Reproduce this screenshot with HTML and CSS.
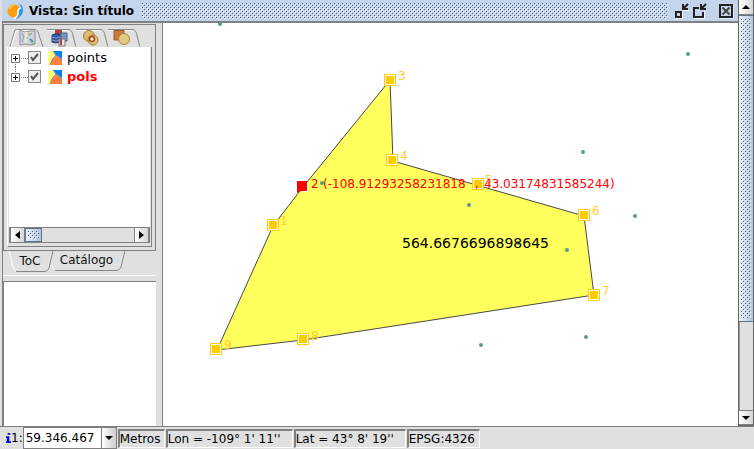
FILE: index.html
```html
<!DOCTYPE html>
<html lang="es">
<head>
<meta charset="utf-8">
<title>Vista: Sin título</title>
<link rel="stylesheet" href="styles.css">
</head>
<body>
<div class="app">
  <div class="workspace">
    <section class="window">
      <header class="titlebar">
        <svg class="logo" width="18" height="18" viewBox="0 0 18 18" aria-hidden="true">
          <circle cx="7" cy="9" r="6.600" fill="#ff9d10"/>
          <path d="M1 7Q3 2 8 2.500Q5 4 4 7Z" fill="#ffc04a"/>
          <path d="M11 1Q16.500 3 16 9Q15 15 8 17.500Q12 14 12 10Q12 7 14 6Q14 3 11 1Z" fill="#2499e8"/>
          <path d="M14 6Q10 7 11 11Q11 14 7 17" fill="none" stroke="#fff" stroke-width="1.500"/>
        </svg>
        <h1>Vista: Sin título</h1>
        <div class="grip"></div>
        <div class="controls">
          <button type="button" aria-label="Minimizar"><svg width="16" height="16" viewBox="0 0 16 16"><g fill="none" stroke="#fff" stroke-width="1"><path d="M2 15.500H8.500V9M9 7.500H15"/></g><g fill="none" stroke="#222" stroke-width="2"><path d="M2 9H7V14H2ZM14 1L9 6M9 1V6H14"/></g></svg></button>
          <button type="button" aria-label="Maximizar"><svg width="16" height="16" viewBox="0 0 16 16"><path d="M2 15.500H12.500V8" fill="none" stroke="#fff"/><path d="M7 5H2V14H11V9M14 1L9 6M9 1V6H14" fill="none" stroke="#222" stroke-width="2"/></svg></button>
          <button type="button" class="close" aria-label="Cerrar"><svg width="16" height="16" viewBox="0 0 16 16"><path d="M15 2V15H2" fill="none" stroke="#fff"/><path d="M2 2H14V14H2Z" fill="none" stroke="#222" stroke-width="2"/><path d="M4.500 4.500L11.500 11.500M11.500 4.500L4.500 11.500" stroke="#444" stroke-width="2"/></svg></button>
        </div>
      </header>
      <div class="content">
        <aside class="sidebar">
          <div class="toc">
            <div class="toc-body">
              <nav class="top-tabs" aria-label="Herramientas">
                <button type="button" aria-label="Mapa"><svg width="35" height="18" viewBox="0 0 35 18"><path d="M1 18L6 1Q7 .5 9 .5H26Q28 1 29 3L34 18" fill="#e0e0e0" stroke="#888"/><path d="M2 18L7 2Q8 1.500 9 1.500H25" fill="none" stroke="#fff"/><path d="M11 1.500L16 3L21 2L26 2V15L21 16L16 15L11 16Z" fill="#d0d3d8" stroke="#8d9299"/><path d="M13 4L15 8L13 13M23 4L20 7" fill="none" stroke="#6ba4c0"/><path d="M21 10L24 13" stroke="#4d98bd" stroke-width="2"/><path d="M17 3V14" stroke="#f5eccd" stroke-width="2"/><path d="M19 5H22M17 9H19M22 14H25" stroke="#a7ab67" stroke-width="1"/></svg></button>
                <button type="button" aria-label="Datos"><svg width="32" height="18" viewBox="0 0 32 18"><path d="M25 .5H3M25 .5Q27 1 28 3L32 18" fill="none" stroke="#888"/><path d="M3 1.500H24" stroke="#fff"/><path d="M11 1H18V6H11Z" fill="#a8443c"/><path d="M17 4H23V12H17Z" fill="#7797c6" stroke="#48658f"/><path d="M8 6Q13 3 16 6V13Q12 15 8 13Z" fill="#345998" stroke="#243c70"/><path d="M8 8Q12 10 16 8M8 11Q12 13 16 11" fill="none" stroke="#87a6d7"/><path d="M15 10H21V17H15Z" fill="#e9eaec" stroke="#777"/><path d="M17 10V16" stroke="#b5413b" stroke-width="2"/></svg></button>
                <button type="button" aria-label="Intersección"><svg width="32" height="18" viewBox="0 0 32 18"><path d="M0 .5H25Q27 1 28 3L32 18" fill="none" stroke="#888"/><path d="M0 1.500H24" stroke="#fff"/><circle cx="13" cy="7" r="5.500" fill="#d9bd73" stroke="#a87938"/><circle cx="17" cy="11" r="5" fill="#dec77f" stroke="#a87938"/><circle cx="16" cy="10" r="2.500" fill="#fff0c8" stroke="#a9441c" stroke-width="1.500"/></svg></button>
                <button type="button" aria-label="Formas"><svg width="32" height="18" viewBox="0 0 32 18"><path d="M0 .5H25Q27 1 28 3L32 18" fill="none" stroke="#888"/><path d="M0 1.500H24" stroke="#fff"/><path d="M6 1.500H16V11H6Z" fill="#c77b3b" stroke="#a45420"/><circle cx="16" cy="10" r="5.500" fill="#dfca82" stroke="#aa8241"/></svg></button>
              </nav>
              <div class="tree-panel">
                <ul class="tree">
                  <li>
                    <svg class="branch" width="19" height="19" viewBox="0 0 19 19" aria-hidden="true"><path d="M10 10.500H19M4.500 14V19" stroke="#777" stroke-dasharray="1 1"/><path d="M.5 6.500H8.500V14.500H.5Z" fill="#fff" stroke="#777"/><path d="M2 10.500H7M4.500 8V13" stroke="#000"/></svg>
                    <input type="checkbox" id="layer-points" checked>
                    <svg width="14" height="14" viewBox="0 0 14 14" aria-hidden="true"><path d="M0 0H7L8 5L2 14H0Z" fill="#ffff80"/><path d="M5 0H14V8L8 4Z" fill="#0080ff"/><path d="M3 14Q2 8 8 5Q12 5 14 9V14Z" fill="#ff8040"/><path d="M5 0L8 4L4 9L2 14M8 4L14 9" fill="none" stroke="#888"/></svg>
                    <label for="layer-points">points</label>
                  </li>
                  <li class="active">
                    <svg class="branch" width="19" height="19" viewBox="0 0 19 19" aria-hidden="true"><path d="M10 10.500H19M4.500 0V6" stroke="#777" stroke-dasharray="1 1"/><path d="M.5 6.500H8.500V14.500H.5Z" fill="#fff" stroke="#777"/><path d="M2 10.500H7M4.500 8V13" stroke="#000"/></svg>
                    <input type="checkbox" id="layer-pols" checked>
                    <svg width="14" height="14" viewBox="0 0 14 14" aria-hidden="true"><path d="M0 0H7L8 5L2 14H0Z" fill="#ffff80"/><path d="M5 0H14V8L8 4Z" fill="#0080ff"/><path d="M3 14Q2 8 8 5Q12 5 14 9V14Z" fill="#ff8040"/><path d="M5 0L8 4L4 9L2 14M8 4L14 9" fill="none" stroke="#888"/></svg>
                    <label for="layer-pols">pols</label>
                  </li>
                </ul>
                <div class="scrollbar horizontal">
                  <button type="button" aria-label="Izquierda"><svg width="5" height="8" viewBox="0 0 5 8"><path d="M5 0V8L0 4Z"/></svg></button>
                  <div class="thumb"></div>
                  <div class="track"></div>
                  <button type="button" aria-label="Derecha"><svg width="5" height="8" viewBox="0 0 5 8"><path d="M0 0V8L5 4Z"/></svg></button>
                </div>
              </div>
            </div>
            <nav class="bottom-tabs" aria-label="Paneles">
              <button type="button" class="selected"><svg width="46" height="21" viewBox="0 0 46 21" aria-hidden="true"><path d="M1 0H45L41 17Q40 20 37 20.500H9Q6 20 5 17Z" fill="#e0e0e0"/><path d="M8 20.500H37Q40 20 41 17L45 0" fill="none" stroke="#888"/><path d="M1 0L5 16Q6 19 8 20" fill="none" stroke="#fff"/></svg><span>ToC</span></button>
              <button type="button"><svg width="74" height="21" viewBox="0 0 74 21" aria-hidden="true"><path d="M3 19.500H65Q68 19 69 16L73 0" fill="none" stroke="#888"/><path d="M0 14Q1 18 3 19" fill="none" stroke="#fff"/></svg><span>Catálogo</span></button>
            </nav>
          </div>
          <div class="locator"></div>
        </aside>
        <main class="map">
          <svg width="100%" height="100%" role="img" aria-label="Mapa">
            <path class="area" d="M227 57L230 138L421 193L431 272L140 317L54 327L110 203L140 164Z"/>
            <g class="points">
              <circle cx="57" cy="1" r="2"/><circle cx="525" cy="31" r="2"/><circle cx="420" cy="129" r="2"/><circle cx="472" cy="193" r="2"/><circle cx="306" cy="182" r="2"/><circle cx="355" cy="220" r="2"/><circle cx="404" cy="227" r="2"/><circle cx="423" cy="314" r="2"/><circle cx="318" cy="322" r="2"/><circle cx="159" cy="160" r="2"/>
            </g>
            <defs><g id="handle"><path d="M-5.500 -5.500H5.500V5.500H-5.500Z" fill="#fff" stroke="#fc0"/><path d="M-4 -4H4V4H-4Z" fill="#fc0"/></g></defs>
            <g class="handles">
              <use href="#handle" x="110" y="202"/><use href="#handle" x="227" y="57"/><use href="#handle" x="229" y="137"/><use href="#handle" x="315" y="161"/><use href="#handle" x="421" y="192"/><use href="#handle" x="431" y="272"/><use href="#handle" x="140" y="316"/><use href="#handle" x="53" y="326"/>
            </g>
            <path d="M136 160H145V169H139Z" fill="#fff"/><path d="M134 158H144V168H138L134 170Z" fill="red"/>
            <g class="numbers">
              <text x="117" y="202">1</text><text x="235" y="57">3</text><text x="237" y="137">4</text><text x="322" y="161">5</text><text x="429" y="192">6</text><text x="439" y="272">7</text><text x="148" y="317">8</text><text x="61" y="326">9</text>
            </g>
            <g class="coordinate">
              <text x="148" y="165">2</text><text x="160" y="165">(-108.91293258231818</text><text x="312" y="165">,</text><text x="321" y="165">43.03174831585244)</text>
            </g>
            <text class="measure" x="239" y="225">564.6676696898645</text>
          </svg>
        </main>
      </div>
    </section>
    <div class="scrollbar vertical">
      <button type="button" aria-label="Arriba"><svg width="8" height="4" viewBox="0 0 8 4"><path d="M0 4H8L4 0Z"/></svg></button>
      <div class="thumb"></div>
      <div class="track"></div>
      <button type="button" aria-label="Abajo"><svg width="8" height="4" viewBox="0 0 8 4"><path d="M0 0H8L4 4Z"/></svg></button>
    </div>
  </div>
  <footer class="status">
    <svg class="info" width="5" height="12" viewBox="0 0 6 12" aria-hidden="true"><path d="M2 0H5V2H2ZM0 4H4V10H6V12H0V10H1V6H0Z" fill="#0000df"/></svg>
    <label for="scale">1:</label>
    <div class="combo">
      <select id="scale"><option>59.346.467</option></select>
      <span class="arrow"><svg width="8" height="4" viewBox="0 0 8 4"><path d="M0 0H8L4 4Z"/></svg></span>
    </div>
    <span class="cell unit">Metros</span>
    <span class="cell longitude">Lon = -109° 1' 11''</span>
    <span class="cell latitude">Lat = 43° 8' 19''</span>
    <span class="cell projection">EPSG:4326</span>
  </footer>
</div>
</body>
</html>
```
FILE: styles.css
```css
* { box-sizing: border-box; }

:root {
  --face: #e0e0e0;
  --edge: #808080;
  --dots: url("data:image/svg+xml,%3Csvg xmlns='http://www.w3.org/2000/svg' width='4' height='4' shape-rendering='crispEdges'%3E%3Cpath d='M1 1h1v1H1zM3 3h1v1H3z' fill='%23fff'/%3E%3Cpath d='M2 2h1v1H2zM0 0h1v1H0z' fill='%234b5d75'/%3E%3C/svg%3E");
}

body {
  margin: 0;
  background: var(--face);
  color: #111;
  font: 12px/16px "DejaVu Sans", sans-serif;
}

button {
  padding: 0;
  border: 0;
  background: none;
  color: inherit;
  font: inherit;
}

svg { display: block; flex: none; }

.app {
  display: flex;
  flex-direction: column;
  height: 100vh;
}

.workspace {
  display: flex;
  flex: 1;
  min-height: 0;
  border-bottom: 1px solid var(--edge);
}

.window {
  display: flex;
  flex: 1;
  flex-direction: column;
  min-width: 0;
  margin-left: 2px;
}

.titlebar {
  display: flex;
  align-items: center;
  height: 23px;
  padding: 0 4px 0 5px;
  border-bottom: 2px solid var(--edge);
  background: #c4d4ea;
}

.titlebar h1 {
  margin: 0 8px 0 4px;
  color: #000;
  font-size: 12px;
  line-height: 20px;
}

.grip {
  flex: 1;
  height: 16px;
  background: var(--dots);
}

.controls {
  display: flex;
  gap: 2px;
  margin-left: 6px;
}

.controls .close { margin-left: 8px; }

.content {
  display: flex;
  flex: 1;
  min-height: 0;
  border-left: 1px solid var(--edge);
}

.sidebar {
  display: flex;
  flex-direction: column;
  width: 160px;
  padding-right: 6px;
  border-right: 1px solid var(--edge);
}

.toc {
  padding-top: 1px;
  border-bottom: 1px solid #fff;
}

.toc-body {
  padding: 0 3px 3px 3px;
  border: 1px solid var(--edge);
}

.top-tabs {
  display: flex;
  height: 22px;
  padding: 4px 0 0 2px;
}

.tree-panel {
  display: flex;
  flex-direction: column;
  height: 200px;
  padding: 0 1px 3px;
  border-right: 1px solid var(--edge);
  border-bottom: 1px solid var(--edge);
  border-left: 1px solid #fff;
}

.tree {
  flex: 1;
  margin: 0;
  padding: 1px 0 0 2px;
  background: #fff;
  list-style: none;
}

.tree li {
  display: flex;
  align-items: center;
  height: 19px;
}

.tree label {
  margin-left: 5px;
  color: #000;
  font-size: 13px;
}

.tree .active label {
  color: red;
  font-weight: bold;
}

.tree input {
  width: 13px;
  height: 13px;
  margin: 0 7px 0 -2px;
  border: 1px solid #888;
  appearance: none;
  background: #eee url("data:image/svg+xml,%3Csvg xmlns='http://www.w3.org/2000/svg' width='11' height='11'%3E%3Cpath d='M2 5l2 3 5-6' fill='none' stroke='%23555' stroke-width='2'/%3E%3C/svg%3E");
}

.scrollbar {
  display: flex;
  background: var(--face);
}

.scrollbar button {
  display: grid;
  place-items: center;
  border: 1px solid var(--edge);
  background: linear-gradient(90deg, #fff, #d5d5d5);
}

.scrollbar .thumb {
  border: 1px solid #60738b;
  background: var(--dots) content-box, linear-gradient(90deg, #e8f0fa, #afc4df);
}

.scrollbar .track { flex: 1; }

.horizontal {
  height: 16px;
  border: 1px solid var(--edge);
}

.horizontal button {
  width: 15px;
  border-width: 0 1px;
}

.horizontal .thumb {
  width: 17px;
  padding: 2px;
}

.vertical {
  flex-direction: column;
  width: 16px;
  border: 1px solid #666;
  border-top: 0;
}

.vertical button {
  height: 15px;
  border-width: 1px 0;
}

.vertical button:first-child { border-top: 0; }

.vertical .thumb {
  height: 307px;
  padding: 3px 2px;
  border-width: 1px 0;
}

.vertical .track { border-left: 1px solid #999; }

.bottom-tabs {
  display: flex;
  height: 24px;
  padding-left: 5px;
}

.bottom-tabs button {
  display: grid;
  align-content: start;
  margin-right: -2px;
}

.bottom-tabs button > * { grid-area: 1 / 1; }

.bottom-tabs span {
  padding-right: 5px;
  padding-top: 1px;
}

.bottom-tabs .selected span {
  padding-right: 2px;
  padding-top: 2px;
}

.locator {
  flex: 1;
  margin-top: 5px;
  border-top: 1px solid var(--edge);
  border-left: 1px solid var(--edge);
  background: #fff;
}

.map {
  flex: 1;
  min-width: 0;
  overflow: hidden;
  background: #fff;
}

.area {
  fill: #ffff5e;
  stroke: #484848;
}

.points { fill: #539c88; }

.numbers { fill: #fc3; }

.coordinate { fill: #f00; }

.measure {
  fill: #000;
  font-size: 14px;
}

.status {
  display: flex;
  align-items: center;
  height: 22px;
  padding-left: 6px;
  color: #000;
}

.combo {
  display: flex;
  width: 94px;
  height: 22px;
  margin-right: 1px;
  border: 1px solid var(--edge);
  background: #fff;
}

.combo select {
  flex: 1;
  min-width: 0;
  padding: 0 2px;
  border: 0;
  appearance: none;
  background: #fff;
  color: #000;
  font: inherit;
}

.arrow {
  display: grid;
  place-items: center;
  width: 15px;
  border-left: 1px solid var(--edge);
  background: linear-gradient(90deg, #fff, #ccc);
}

.cell {
  height: 19px;
  margin-right: 1px;
  border: 2px solid var(--edge);
  border-right: 1px solid #fff;
  border-bottom: 1px solid #fff;
  white-space: nowrap;
}

.unit { min-width: 47px; }

.longitude { min-width: 127px; }

.latitude { min-width: 112px; }

.projection { min-width: 73px; }
```
